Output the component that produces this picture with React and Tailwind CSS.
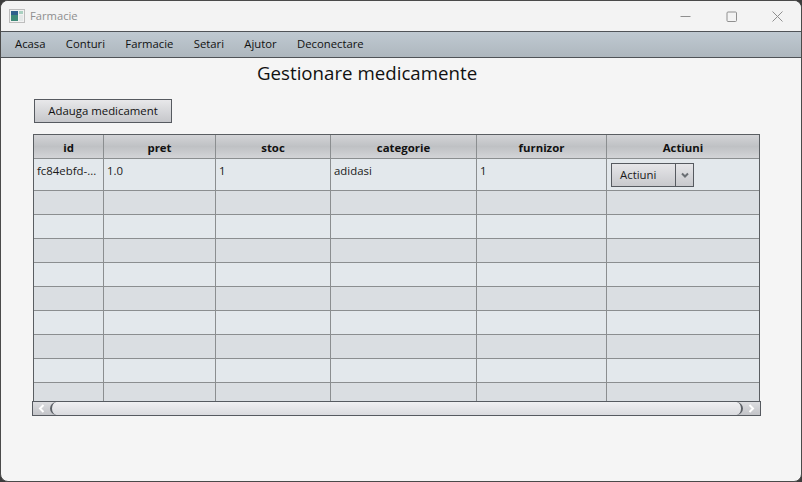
import React from 'react';

const columns = ['id', 'pret', 'stoc', 'categorie', 'furnizor', 'Actiuni'];
const gridCols = 'grid grid-cols-[70px_112px_115px_146px_130px_152px]';
const menuItems = ['Acasa', 'Conturi', 'Farmacie', 'Setari', 'Ajutor', 'Deconectare'];
const emptyRows = [0, 1, 2, 3, 4, 5, 6, 7, 8];

function AppIcon() {
  return (
    <svg width="16" height="14" viewBox="0 0 16 14">
      <rect x="0.5" y="0.5" width="15" height="13" fill="#f2f2f2" stroke="#bdbdbd" />
      <rect x="2" y="2" width="7" height="10" fill="#3f8a78" />
      <rect x="2" y="2" width="7" height="4" fill="#2f5f8c" />
      <rect x="10" y="2" width="4" height="3" fill="#a9d0c0" />
      <rect x="10" y="6" width="4" height="6" fill="#e4e8e8" />
    </svg>
  );
}

function WindowControls() {
  return (
    <div className="flex items-center gap-[35px] pr-[18px]">
      <svg width="11" height="11" viewBox="0 0 11 11">
        <path d="M0.5 5.5H10.5" stroke="#8f8f8f" strokeWidth="1" />
      </svg>
      <svg width="11" height="11" viewBox="0 0 11 11">
        <rect x="1" y="1" width="9.5" height="9.5" rx="1" fill="none" stroke="#8f8f8f" />
      </svg>
      <svg width="11" height="11" viewBox="0 0 11 11">
        <path d="M0.5 0.5L10.5 10.5M10.5 0.5L0.5 10.5" stroke="#8f8f8f" strokeWidth="1" />
      </svg>
    </div>
  );
}

function Cell({ children }) {
  return (
    <div className="pl-[3px] pt-[3px] text-[11.4px] leading-[18px] text-[#1a1a1a] border-r border-[#8b8e90]">
      {children}
    </div>
  );
}

export default function App() {
  return (
    <div className="w-[802px] h-[482px] bg-[#3c3c3c] font-['Open_Sans','Noto_Sans',sans-serif]">
      <div className="w-full h-full rounded-[8px] border border-[#4a4a4a] bg-[#f5f5f5] overflow-hidden flex flex-col">
        {/* Title bar */}
        <div className="h-[30px] bg-[#f3f3f3] flex items-center justify-between shrink-0">
          <div className="flex items-center pl-[8px] gap-[5px]">
            <AppIcon />
            <span className="text-[11.2px] text-[#8e8e8e]">Farmacie</span>
          </div>
          <WindowControls />
        </div>

        {/* Menu */}
        <div className="h-[27px] shrink-0 border-y border-[#4f5357] bg-gradient-to-b from-[#bfc9d1] to-[#aeb7be] flex items-center pl-[14px] gap-[20.3px] text-[11.3px] text-[#111]">
          {menuItems.map((item) => (
            <span key={item}>{item}</span>
          ))}
        </div>

        {/* Content */}
        <div className="flex-1 flex flex-col">
          <h1 className="ml-[256px] mt-[2px] text-[18.7px] leading-[26px] text-[#111] font-normal">Gestionare medicamente</h1>

          <button className="ml-[33px] mt-[13px] w-[138px] h-[24px] border border-[#565a60] bg-gradient-to-b from-[#e8e8ea] to-[#c6c7cb] text-[11.4px] text-[#111] flex items-center justify-center">
            Adauga medicament
          </button>

          {/* Table */}
          <div className="ml-[32px] mt-[11px] w-[727px] h-[268px] border-x border-t border-[#5a5e62] overflow-hidden">
            <div className={`${gridCols} h-[24px] border-b border-[#8b8e90] bg-[linear-gradient(#d3d4d7,#bfc1c4_50%,#d3d4d7)]`}>
              {columns.map((col, i) => (
                <div
                  key={col}
                  className={`text-center text-[11.4px] leading-[26px] font-bold text-[#111] ${i < 5 ? 'border-r border-[#8b8e90]' : ''}`}
                >
                  {col}
                </div>
              ))}
            </div>

            <div className={`${gridCols} h-[32px] border-b border-[#8b8e90] bg-[#e3e8ec]`}>
              <Cell>fc84ebfd-...</Cell>
              <Cell>1.0</Cell>
              <Cell>1</Cell>
              <Cell>adidasi</Cell>
              <Cell>1</Cell>
              <div className="pl-[4px] pt-[4px]">
                <div className="w-[83px] h-[24px] border border-[#565a60] bg-gradient-to-b from-[#e6e6e9] to-[#c8c9cd] flex text-[11.4px] text-[#1a1a1a]">
                  <div className="flex-1 border-r border-[#565a60] pl-[8px] leading-[22px]">Actiuni</div>
                  <div className="w-[17px] flex items-center justify-center">
                    <svg width="8" height="6" viewBox="0 0 8 6">
                      <path d="M1 1.5L4 4.5L7 1.5" fill="none" stroke="#6a6e73" strokeWidth="2" />
                    </svg>
                  </div>
                </div>
              </div>
            </div>

            {emptyRows.map((row) => (
              <div
                key={row}
                className={`${gridCols} h-[24px] border-b border-[#8b8e90] ${row % 2 === 0 ? 'bg-[#dadee2]' : 'bg-[#e3e8ec]'}`}
              >
                {columns.map((col, i) => (
                  <div key={col} className={i < 5 ? 'border-r border-[#8b8e90]' : ''} />
                ))}
              </div>
            ))}
          </div>

          {/* Horizontal scrollbar */}
          <div className="ml-[31px] -mt-[1px] w-[729px] h-[15px] border border-[#565a60] bg-gradient-to-b from-[#dcdde0] to-[#c3c4c8] flex relative z-10">
            <div className="w-[17px] flex items-center justify-center">
              <svg width="7" height="9" viewBox="0 0 7 9">
                <path d="M5.5 1L2 4.5L5.5 8" fill="none" stroke="#fff" strokeWidth="2" />
              </svg>
            </div>
            <div className="flex-1 rounded-[7px] border-x-2 border-[#5c6066] bg-gradient-to-b from-[#f0f0f2] to-[#dadbdf]" />
            <div className="w-[17px] flex items-center justify-center">
              <svg width="7" height="9" viewBox="0 0 7 9">
                <path d="M1.5 1L5 4.5L1.5 8" fill="none" stroke="#fff" strokeWidth="2" />
              </svg>
            </div>
          </div>
        </div>
      </div>
    </div>
  );
}
